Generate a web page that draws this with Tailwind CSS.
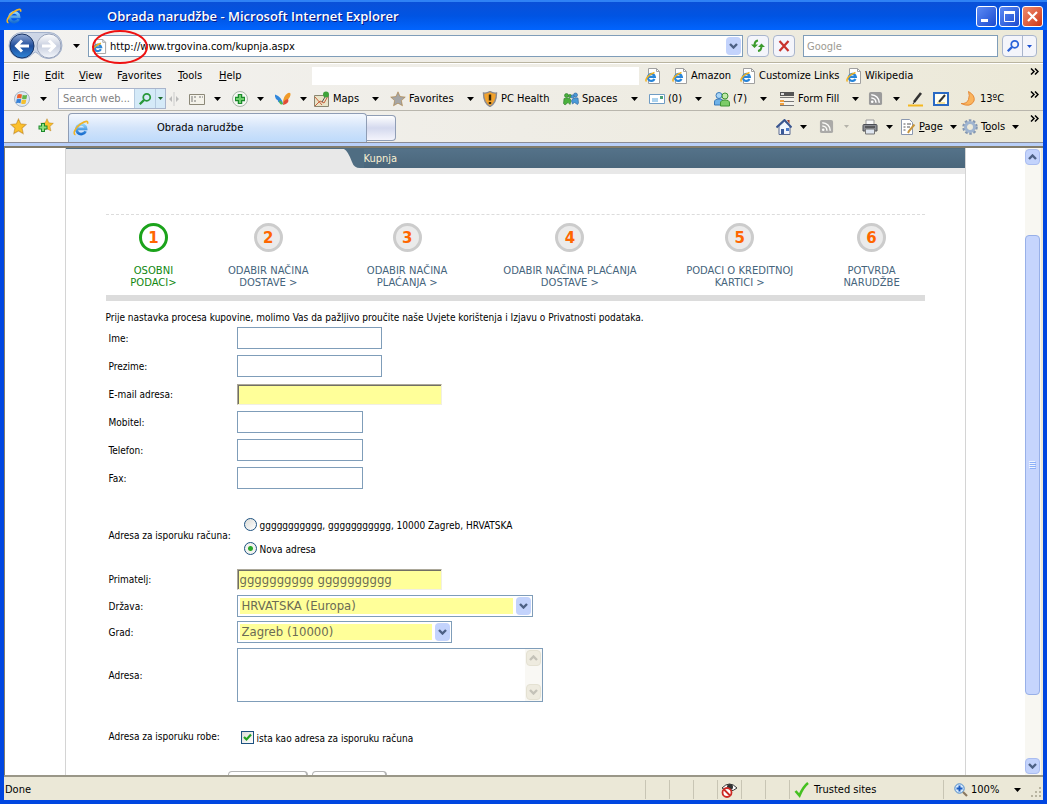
<!DOCTYPE html>
<html lang="hr">

<head>
    <meta charset="UTF-8">
    <meta name="viewport" content="width=device-width, initial-scale=1.0">
    <title>Obrada narudžbe - Microsoft Internet Explorer</title>
    <script src="https://cdn.jsdelivr.net/npm/@tailwindcss/browser@4"></script>
</head>

<body class="h-screen flex flex-col overflow-hidden bg-[#0046e0] text-black text-[11px] leading-4 font-['DejaVu_Sans_Condensed','DejaVu_Sans',sans-serif]">

    <!-- Shared icons -->
    <svg class="absolute size-0">
        <linearGradient id="gBlue" x1="0" y1="0" x2="0" y2="1"><stop offset="0" stop-color="#8fd4fa"/><stop offset="1" stop-color="#1a6fd0"/></linearGradient>
        <symbol id="arrow" viewBox="0 0 7 4"><path d="M0 0h7L3.500 4z" fill="currentColor"/></symbol>
        <symbol id="more" viewBox="0 0 9 7"><path d="M1 .5l3 3-3 3M5 .5l3 3-3 3" fill="none" stroke="#000" stroke-width="1.500"/></symbol>
        <symbol id="chev" viewBox="0 0 9 6"><path d="M1 1l3.500 3.500L8 1" fill="none" stroke="currentColor" stroke-width="2.400"/></symbol>
        <symbol id="ie" viewBox="0 0 16 16">
            <path d="M12.600 11.200A4.800 4.800 0 1 1 13 8.800H4.500" fill="none" stroke="url(#gBlue)" stroke-width="2.800"/>
            <path d="M2.500 14.800C-.8 14 2.500 7.500 7.500 4S15.500.5 14.500 3.800" fill="none" stroke="#f0b428" stroke-width="1.600"/>
        </symbol>
        <symbol id="iepage" viewBox="0 0 16 16">
            <path d="M3.500.5h8l3 3v12h-11z" fill="#fff" stroke="#a0a0a0"/>
            <path d="M11.500.5v3h3" fill="none" stroke="#a0a0a0"/>
            <path d="M9.500 11A3.500 3.500 0 1 1 9.800 8.800H3.500" fill="none" stroke="#2a86d8" stroke-width="2.200"/>
            <path d="M1.500 13.500C-.5 12 3 6.500 9.500 4.500" fill="none" stroke="#f0b020" stroke-width="1.500"/>
        </symbol>
        <symbol id="rss" viewBox="0 0 16 16">
            <rect x="1" y="1" width="14" height="14" rx="2" fill="#9b9b9b"/>
            <circle cx="4.500" cy="11.500" r="1.400" fill="#fff"/>
            <path d="M3.500 7.500a5 5 0 0 1 5 5M3.500 4a8.500 8.500 0 0 1 8.500 8.500" fill="none" stroke="#fff" stroke-width="1.600"/>
        </symbol>
        <symbol id="star" viewBox="0 0 16 16"><path d="M8 .8l2.100 4.700 5.200.6-3.900 3.500 1.100 5.200L8 12.200l-4.500 2.600 1.100-5.200L.7 6.100l5.200-.6z" fill="currentColor" stroke="#a0600066"/></symbol>
    </svg>

    <!-- Title bar -->
    <header class="h-[30px] shrink-0 flex items-center bg-linear-to-b from-[#0a50d8] via-[#0054e3] to-[#0164fe] border-t-2 border-[#2f82f5] pl-[6px] pr-1">
        <svg class="size-4"><use href="#ie"/></svg>
        <h1 class="ml-[85px] flex-1 text-[13px] font-semibold text-white font-['Open_Sans','Noto_Sans',sans-serif] [text-shadow:1px_1px_#0a1883]">Obrada narudžbe - Microsoft Internet Explorer</h1>
        <div class="flex gap-[2px]">
            <button aria-label="Minimize" class="size-[21px] rounded-[3px] border border-white bg-linear-to-br from-[#5d8bf5] to-[#1c49cf]"><svg class="size-[19px]" viewBox="0 0 19 19"><path d="M4 12h7v3H4z" fill="#fff"/></svg></button>
            <button aria-label="Maximize" class="size-[21px] rounded-[3px] border border-white bg-linear-to-br from-[#5d8bf5] to-[#1c49cf]"><svg class="size-[19px]" viewBox="0 0 19 19"><path d="M4.500 5v9.500h10V5M4 5h11" fill="none" stroke="#fff"/><path d="M4 4h11v3H4z" fill="#fff"/></svg></button>
            <button aria-label="Close" class="size-[21px] rounded-[3px] border border-white bg-linear-to-br from-[#f08a6c] to-[#cc3310]"><svg class="size-[19px]" viewBox="0 0 19 19"><path d="M5 5l9 9M14 5l-9 9" stroke="#fff" stroke-width="2.200"/></svg></button>
        </div>
    </header>

    <div class="flex-1 min-h-0 mx-1 mb-1 flex flex-col bg-linear-to-r from-[#f3f2f0] via-[#efede6] to-[#ece9d8]">

        <!-- Address bar -->
        <div class="relative h-[33px] shrink-0 flex items-center border-b border-[#b9b4a0] pl-1 pr-[6px]">
            <svg class="w-[56px] h-[30px] shrink-0" viewBox="0 0 56 30">
                <defs>
                    <linearGradient id="nav" x1="0" y1="0" x2="0" y2="1"><stop offset="0" stop-color="#8fa6d2"/><stop offset=".5" stop-color="#1f4d9c"/><stop offset="1" stop-color="#2f86d8"/></linearGradient>
                    <linearGradient id="nav2" x1="0" y1="0" x2="0" y2="1"><stop offset="0" stop-color="#fff"/><stop offset=".5" stop-color="#c8cfdf"/><stop offset="1" stop-color="#f4f7fc"/></linearGradient>
                </defs>
                <path d="M14 1.500h27a13 13 0 0 1 0 26q-7 0-11-5-3-3-5 0-4 5-11 5a13 13 0 0 1 0-26z" fill="#cdd6e6" stroke="#a4b2cc"/>
                <circle cx="14" cy="15" r="12" fill="url(#nav)" stroke="#1a3566"/>
                <path d="M21 15H9M14 9.500L8.500 15l5.500 5.500" fill="none" stroke="#fff" stroke-width="3"/>
                <circle cx="41" cy="15" r="12" fill="url(#nav2)" stroke="#98a3ba"/>
                <path d="M34 15h12M41 9.500l5.500 5.500-5.500 5.500" fill="none" stroke="#fff" stroke-width="3"/>
            </svg>
            <button aria-label="Recent pages" class="w-[24px] shrink-0 grid place-items-center"><svg class="w-[7px] h-1"><use href="#arrow"/></svg></button>
            <div class="flex-1 h-[22px] flex items-center border border-[#7f9db9] bg-white pl-[3px] pr-px">
                <svg class="size-[15px] shrink-0"><use href="#iepage"/></svg>
                <input aria-label="Address" value="http://www.trgovina.com/kupnja.aspx" class="ml-[3px] min-w-0 flex-1 h-5 outline-none">
                <button aria-label="Show address list" class="w-[15px] h-[18px] rounded-sm bg-[#c3d3fc] text-[#4d6185] grid place-items-center"><svg class="w-[9px] h-[6px]"><use href="#chev"/></svg></button>
            </div>
            <button aria-label="Refresh" class="ml-1 size-[22px] shrink-0 rounded-sm border border-[#a9b5cc] bg-[#f4f5fb] grid place-items-center">
                <svg class="size-4" viewBox="0 0 16 16" fill="none" stroke="#3a9a2c" stroke-width="2"><path d="M8 2.500q-3.500.5-3.500 5M8 13q3.500-.5 3.500-5"/><path d="M1 6.500h7L4.500 10zM15 9H8l3.500-3.500z" fill="#3a9a2c" stroke="none"/></svg>
            </button>
            <button aria-label="Stop" class="ml-1 size-[22px] shrink-0 rounded-sm border border-[#a9b5cc] bg-[#f4f5fb] grid place-items-center">
                <svg class="size-4" viewBox="0 0 16 16"><path d="M3.500 3l9 10M12.500 3l-9 10" stroke="#c8322c" stroke-width="2.200"/></svg>
            </button>
            <input aria-label="Search" placeholder="Google" class="ml-2 w-[195px] h-[22px] shrink-0 border border-[#7f9db9] bg-white px-[3px] outline-none placeholder:text-[#9c9a92]">
            <div class="ml-1 h-[22px] shrink-0 flex rounded-sm border border-[#a9b5cc] bg-[#f4f5fb]">
                <button aria-label="Go" class="w-5 grid place-items-center border-r border-[#a9b5cc]"><svg class="size-[14px]" viewBox="0 0 16 16" fill="none" stroke="#2a62d8"><circle cx="10" cy="6" r="4" stroke-width="2"/><path d="M7 9l-5 5" stroke-width="2.600"/></svg></button>
                <button aria-label="Search options" class="w-[13px] grid place-items-center text-[#1a4fd0]"><svg class="w-[5px] h-[3px]"><use href="#arrow"/></svg></button>
            </div>
            <!-- Red marker round the protocol -->
            <svg class="absolute left-[86px] -top-px w-[60px] h-[37px] pointer-events-none" viewBox="0 0 60 37"><ellipse cx="30" cy="18" rx="27" ry="16" fill="none" stroke="#ee1111" stroke-width="2"/></svg>
        </div>

        <!-- Menu and links -->
        <div class="h-[24px] shrink-0 flex items-center border-t border-white pl-[9px] pr-1 whitespace-nowrap">
            <nav class="flex w-[299px] shrink-0">
                <a href="#" class="w-8"><u>F</u>ile</a>
                <a href="#" class="w-[34px]"><u>E</u>dit</a>
                <a href="#" class="w-[38px]"><u>V</u>iew</a>
                <a href="#" class="w-[61px]">F<u>a</u>vorites</a>
                <a href="#" class="w-[41px]"><u>T</u>ools</a>
                <a href="#"><u>H</u>elp</a>
            </nav>
            <div class="flex-1 h-[18px] bg-white"></div>
            <nav class="flex shrink-0 ml-[6px]">
                <a href="#" aria-label="Link" class="w-[27px]"><svg class="size-4"><use href="#iepage"/></svg></a>
                <a href="#" class="w-[68px] flex gap-[3px]"><svg class="size-4"><use href="#iepage"/></svg>Amazon</a>
                <a href="#" class="w-[106px] flex gap-[3px]"><svg class="size-4"><use href="#iepage"/></svg>Customize Links</a>
                <a href="#" class="w-[184px] flex gap-[3px]"><svg class="size-4"><use href="#iepage"/></svg>Wikipedia</a>
            </nav>
            <button aria-label="More links" class="w-[9px] self-start pt-1"><svg class="w-[9px] h-[7px]"><use href="#more"/></svg></button>
        </div>

        <!-- Toolbar -->
        <div class="h-[24px] shrink-0 flex items-center border-b border-[#b9b6ad] pl-[10px] pr-1 whitespace-nowrap">
            <button aria-label="Windows Live" class="w-[44px] shrink-0 flex items-center gap-[10px]">
                <svg class="size-4" viewBox="0 0 16 16"><circle cx="8" cy="8" r="7.500" fill="#dce8f4" stroke="#a8b4c4"/><path d="M3.500 3.500q2-1 4.500 0L7.300 7.500q-2.500-1-4.500 0z" fill="#f0602c"/><path d="M8.700 3.700q2 1 4.500 0L12.500 7.700q-2.500 1-4.500 0z" fill="#62b44c"/><path d="M2.700 8.300q2-1 4.500 0l-.7 4q-2.500-1-4.500 0z" fill="#3480d8"/><path d="M7.800 8.600q2 1 4.500 0l-.7 4q-2.500 1-4.500 0z" fill="#f4c030"/></svg>
                <svg class="w-[7px] h-1"><use href="#arrow"/></svg>
            </button>
            <div class="w-[108px] h-[21px] shrink-0 flex border border-[#a9b5cc] bg-white">
                <input aria-label="Search web" placeholder="Search web..." class="w-[75px] pl-1 outline-none placeholder:text-[#808080]">
                <button aria-label="Search" class="w-[22px] grid place-items-center bg-[#d5eaf8] border-x border-[#b5cbe0]"><svg class="size-[14px]" viewBox="0 0 16 16" fill="none" stroke="#27983a"><circle cx="10" cy="6" r="4" stroke-width="2"/><path d="M7 9l-5 5" stroke-width="2.600"/></svg></button>
                <button aria-label="Search options" class="flex-1 grid place-items-center bg-[#d5eaf8] text-[#1c6a2c]"><svg class="w-[5px] h-[3px]"><use href="#arrow"/></svg></button>
            </div>
            <svg class="ml-[3px] w-[10px] h-[14px] shrink-0" viewBox="0 0 10 14"><path d="M5 0v14" stroke="#ccc"/><path d="M3 4L0 7l3 3zM7 4l3 3-3 3z" fill="#bbb"/></svg>
            <button aria-label="Card" class="ml-[10px] w-[43px] shrink-0 flex items-center gap-[9px]">
                <svg class="size-4" viewBox="0 0 16 16"><path d="M.5 3.500h15v10H.5z" fill="#f4f2ea" stroke="#8c8878"/><path d="M2 6h6M2 8h3M10 6h4M2 10h6" stroke="#777" stroke-dasharray="2 1"/></svg>
                <svg class="w-[7px] h-1"><use href="#arrow"/></svg>
            </button>
            <button aria-label="Add" class="w-[43px] shrink-0 flex items-center gap-[9px]">
                <svg class="size-4" viewBox="0 0 16 16"><circle cx="8" cy="8" r="7.500" fill="#f4f7f2" stroke="#a9b5a9"/><path d="M8 3v10M3 8h10" stroke="#1c8a2c" stroke-width="4.500"/><path d="M8 4v8M4 8h8" stroke="#6fd06c" stroke-width="2"/></svg>
                <svg class="w-[7px] h-1"><use href="#arrow"/></svg>
            </button>
            <button aria-label="MSN" class="w-[39px] shrink-0 flex items-center gap-[9px]">
                <svg class="size-4" viewBox="0 0 16 16"><path d="M8 13Q7 6 0 3.500-.5 8 3 9.500q-1 2 5 3.500z" fill="#2f86dc"/><path d="M8 12Q8 5 13 2q3-1 2.500 2-1 5-7.500 8z" fill="#f09a28"/><path d="M4 10q2-2 4 3-3 2-4-3z" fill="#4db848"/><path d="M8 14q0-5 5-6 2 4-5 6z" fill="#e04a38"/></svg>
                <svg class="w-[7px] h-1"><use href="#arrow"/></svg>
            </button>
            <button class="w-[76px] shrink-0 flex items-center gap-[3px]">
                <svg class="size-4" viewBox="0 0 16 16"><path d="M.5 4.500h14v11H.5z" fill="#e9e4c8" stroke="#8a8670"/><path d="M1 15l5-5 4 2 4-7M1 6l7 8" fill="none" stroke="#c8603c"/><circle cx="12" cy="3.500" r="3" fill="#3fa33a"/><path d="M11 6l-3 5" stroke="#555"/></svg>
                Maps
                <svg class="ml-[10px] w-[7px] h-1"><use href="#arrow"/></svg>
            </button>
            <button class="w-[92px] shrink-0 flex items-center gap-[3px]">
                <svg class="size-4 text-[#a6a6a6]"><use href="#star"/></svg>
                Favorites
                <svg class="ml-[10px] w-[7px] h-1"><use href="#arrow"/></svg>
            </button>
            <button class="w-[81px] shrink-0 flex items-center gap-[3px]">
                <svg class="size-4" viewBox="0 0 16 16"><path d="M8 .5q3 2 6.500 1.500 0 10-6.500 13.500Q1.500 12 1.500 2 5 2.500 8 .5z" fill="#f2a22c" stroke="#8a8a90" stroke-width="1.400"/><path d="M8 3.500v6M8 11v2" stroke="#3a2808" stroke-width="2.400"/></svg>
                PC Health
            </button>
            <button class="w-[86px] shrink-0 flex items-center gap-[3px]">
                <svg class="size-4" viewBox="0 0 16 16"><g fill="#4ab03c" stroke="#2a7a2c" stroke-width=".6"><circle cx="3.500" cy="4.500" r="2"/><circle cx="7" cy="5" r="1.600"/><path d="M1 7.500q3-1 6 0l1 2-1 4-2-2-3 2.500-1.500-1.500z"/></g><g fill="#4a9ad8" stroke="#2a6098" stroke-width=".6"><circle cx="12.500" cy="4" r="2"/><circle cx="9.500" cy="5.500" r="1.600"/><path d="M15 7q-3-1-5.500 1l-1 2 1 3 2-1.500 3 2 1-1.500z"/></g></svg>
                Spaces
                <svg class="ml-[11px] w-[7px] h-1"><use href="#arrow"/></svg>
            </button>
            <button class="w-[65px] shrink-0 flex items-center gap-[3px]">
                <svg class="size-4" viewBox="0 0 16 16"><path d="M.5 3.500h15v9H.5z" fill="#fff" stroke="#6f9cc4"/><path d="M3 8h6M3 10h6" stroke="#58a6dc"/><path d="M11 5h3v3h-3z" fill="#4aa078"/></svg>
                (0)
                <svg class="ml-[10px] w-[7px] h-1"><use href="#arrow"/></svg>
            </button>
            <button class="w-[65px] shrink-0 flex items-center gap-[3px]">
                <svg class="size-4" viewBox="0 0 16 16"><circle cx="5" cy="4.500" r="3" fill="#a9d4f4" stroke="#3a7ab8"/><path d="M.5 14V11q0-3 4.500-3t4.500 3v3z" fill="#6fb2e8" stroke="#3a7ab8"/><circle cx="11" cy="5" r="3" fill="#c0e8a8" stroke="#3f9434"/><path d="M6.500 15v-3q0-3 4.500-3t4.500 3v3z" fill="#7ccc68" stroke="#3f9434"/></svg>
                (7)
                <svg class="ml-[10px] w-[7px] h-1"><use href="#arrow"/></svg>
            </button>
            <button class="w-[89px] shrink-0 flex items-center gap-[3px]">
                <svg class="size-4" viewBox="0 0 16 16"><path d="M1 1h14v4H1z" fill="#555"/><path d="M2 2h3v2H2z" fill="#ddd"/><path d="M1 6h14v9H1z" fill="#f4f2ec"/><path d="M1 6.500h14M5 10.500h10M1 14.500h14" stroke="#777"/><path d="M1 9h4v2H1zM1 12h4v2H1z" fill="#f0a040"/></svg>
                Form Fill
                <svg class="ml-[10px] w-[7px] h-1"><use href="#arrow"/></svg>
            </button>
            <button aria-label="Feeds" class="w-[40px] shrink-0 flex items-center gap-[10px]">
                <svg class="size-[15px]"><use href="#rss"/></svg>
                <svg class="w-[7px] h-1"><use href="#arrow"/></svg>
            </button>
            <button aria-label="Highlight" class="w-[25px] shrink-0"><svg class="size-4" viewBox="0 0 16 16"><path d="M13 2L6 11" stroke="#333" stroke-width="2.600"/><path d="M7 10l-2 3" stroke="#222"/><path d="M0 14.500h15" stroke="#f4b820" stroke-width="2"/></svg></button>
            <button aria-label="Note" class="w-[27px] shrink-0"><svg class="size-4" viewBox="0 0 16 16"><path d="M1 2h14v12H1z" fill="#fffff4" stroke="#2a6ac4" stroke-width="2"/><path d="M12 4l-6 7" stroke="#333" stroke-width="2"/><path d="M4 12h8" stroke="#f4c840"/></svg></button>
            <button class="shrink-0 flex items-center gap-1">
                <svg class="size-4" viewBox="0 0 16 16"><path d="M8.500.5q7 4 5.500 9.500Q10.500 17 1 12.500q6 .5 7.500-4Q10 4.500 8.500.5z" fill="#fbb45c" stroke="#e58a38"/></svg>
                13ºC
            </button>
            <button aria-label="More tools" class="ml-auto w-[9px] self-start pt-1"><svg class="w-[9px] h-[7px]"><use href="#more"/></svg></button>
        </div>

        <!-- Tabs and commands -->
        <div class="h-[32px] shrink-0 flex items-end border-b border-[#8a8c96] pl-[6px] pr-1 whitespace-nowrap">
            <button aria-label="Favorites Center" class="w-[27px] h-full shrink-0"><svg class="size-[17px] text-[#fbc02d]"><use href="#star"/></svg></button>
            <button aria-label="Add to Favorites" class="w-[31px] h-full shrink-0"><svg class="size-[17px] text-[#fbc02d]" viewBox="0 0 17 17"><use href="#star" x="3" y="0" width="14" height="14"/><path d="M6 5v9M1.500 9.500h9" stroke="#1c8a2c" stroke-width="4"/><path d="M6 6v7M2.500 9.500h7" stroke="#8ce07c" stroke-width="2"/></svg></button>
            <div class="w-[299px] h-[29px] shrink-0 flex items-center border border-b-0 border-[#8f9db5] rounded-t bg-linear-to-b from-[#f4f8fe] via-[#d3e4fa] to-[#bddafb] pl-1">
                <svg class="size-4"><use href="#ie"/></svg>
                <span class="ml-[68px]">Obrada narudžbe</span>
            </div>
            <button aria-label="New tab" class="w-[29px] h-[26px] mb-px shrink-0 border border-l-0 border-[#8f9db5] rounded-r-sm bg-linear-to-b from-white via-[#d4d9ee] to-[#f4f4fc]"></button>
            <div class="ml-auto flex items-center h-full">
                <button aria-label="Home" class="w-[43px] flex items-center gap-2">
                    <svg class="size-4" viewBox="0 0 16 16"><path d="M3 7v8.500h11V7L8.500 2z" fill="#f2f5fc" stroke="#5a6a90"/><path d="M11 1h2.500v4z" fill="#a04030"/><path d="M.5 8.500l8-7.500 7 7.500" fill="none" stroke="#3a5690" stroke-width="2"/><path d="M5 10h3v5H5z" fill="#3a5a9a"/><path d="M10 9h3v3h-3z" fill="#4a78c8"/></svg>
                    <svg class="w-[7px] h-1"><use href="#arrow"/></svg>
                </button>
                <button aria-label="Feeds" class="w-[43px] flex items-center gap-[10px]">
                    <svg class="size-[15px] opacity-80"><use href="#rss"/></svg>
                    <svg class="w-[5px] h-[3px] text-[#b4b2aa]"><use href="#arrow"/></svg>
                </button>
                <button aria-label="Print" class="w-[38px] flex items-center gap-2">
                    <svg class="size-4" viewBox="0 0 16 16"><path d="M4 1h8v5H4z" fill="#f8f8f8" stroke="#999"/><path d="M1 6.500q0-1 1-1h12q1 0 1 1V12H1z" fill="#8b8d94" stroke="#4c4e55"/><path d="M3.500 10h9v5h-9z" fill="#dfe6f0" stroke="#777"/><path d="M3 8h10" stroke="#222"/></svg>
                    <svg class="w-[7px] h-1"><use href="#arrow"/></svg>
                </button>
                <button class="w-[62px] flex items-center gap-[3px]">
                    <svg class="size-4" viewBox="0 0 16 16"><path d="M1.500.5h8l3 3v12h-11z" fill="#fff" stroke="#8a98b0"/><path d="M3.500 5h2M3.500 8h2M3.500 11h2M7 5h4M7 8h3" stroke="#555"/><path d="M14.500 5.500L9 12l-1 2" fill="none" stroke="#c8963c" stroke-width="2"/></svg>
                    <span><u>P</u>age</span>
                    <svg class="ml-1 w-[7px] h-1"><use href="#arrow"/></svg>
                </button>
                <button class="w-[68px] flex items-center gap-[3px]">
                    <svg class="size-4" viewBox="0 0 16 16"><circle cx="8" cy="8" r="6.500" fill="none" stroke="#8497b2" stroke-width="2.500" stroke-dasharray="2.500 1.600"/><circle cx="8" cy="8" r="4.500" fill="none" stroke="#9fb4d0" stroke-width="3"/></svg>
                    <span>T<u>o</u>ols</span>
                    <svg class="ml-1 w-[7px] h-1"><use href="#arrow"/></svg>
                </button>
                <button aria-label="More commands" class="w-[9px] self-start pt-1"><svg class="w-[9px] h-[7px]"><use href="#more"/></svg></button>
            </div>
        </div>
        <div class="h-[5px] shrink-0 bg-[#b9cff8] border-b-2 border-[#817c6c]"></div>

        <!-- Page area -->
        <div class="flex-1 min-h-0 flex border-l border-[#817c6c] bg-white mr-[2px]">
            <main class="flex-1 min-w-0 overflow-hidden text-[10px] leading-[14px]">
                <div class="max-w-[901px] mx-auto min-h-full border-x border-[#d4d4d4]">
                    <div class="flex h-[26px] bg-[#e8e8e8] border-t border-[#4f6d82]">
                        <svg class="ml-[278px] w-5 h-[19px] shrink-0" viewBox="0 0 20 19"><path d="M0 0h20v19H16q-6 0-8-6Q4 2 0 0z" fill="#4f6d82"/></svg>
                        <h2 class="flex-1 h-[19px] bg-linear-to-b from-[#547289] to-[#4a667b] text-[11px] leading-5 text-[#fbf0d2]">Kupnja</h2>
                    </div>

                    <div class="px-10">
                        <ol class="mt-10 pt-2 pb-[6px] border-t border-dashed border-[#dcdcdc] border-b-6 [border-bottom-style:solid] border-b-[#dcdcdc] grid grid-cols-[96fr_134fr_144fr_182fr_158fr_106fr] text-center text-[10px] leading-3 text-[#45647c] font-['DejaVu_Sans',sans-serif]">
                            <li><span class="block size-[29px] mx-auto mb-[13px] rounded-full border-3 border-[#1ba31b] bg-white text-[15px] leading-6 font-bold text-[#ff6600]">1</span><span class="text-[#118811]">OSOBNI<br>PODACI&gt;</span></li>
                            <li><span class="block size-[29px] mx-auto mb-[13px] rounded-full border-3 border-[#cccccc] bg-[#ebebeb] text-[15px] leading-6 font-bold text-[#ff6600]">2</span>ODABIR NAČINA<br>DOSTAVE &gt;</li>
                            <li><span class="block size-[29px] mx-auto mb-[13px] rounded-full border-3 border-[#cccccc] bg-[#ebebeb] text-[15px] leading-6 font-bold text-[#ff6600]">3</span>ODABIR NAČINA<br>PLAĆANJA &gt;</li>
                            <li><span class="block size-[29px] mx-auto mb-[13px] rounded-full border-3 border-[#cccccc] bg-[#ebebeb] text-[15px] leading-6 font-bold text-[#ff6600]">4</span>ODABIR NAČINA PLAĆANJA<br>DOSTAVE &gt;</li>
                            <li><span class="block size-[29px] mx-auto mb-[13px] rounded-full border-3 border-[#cccccc] bg-[#ebebeb] text-[15px] leading-6 font-bold text-[#ff6600]">5</span>PODACI O KREDITNOJ<br>KARTICI &gt;</li>
                            <li><span class="block size-[29px] mx-auto mb-[13px] rounded-full border-3 border-[#cccccc] bg-[#ebebeb] text-[15px] leading-6 font-bold text-[#ff6600]">6</span>POTVRDA<br>NARUDŽBE</li>
                        </ol>

                        <p class="mt-[10px] leading-[13px]">Prije nastavka procesa kupovine, molimo Vas da pažljivo proučite naše Uvjete korištenja i Izjavu o Privatnosti podataka.</p>

                        <form class="pl-[3px]">
                            <div class="h-7 flex items-center"><label for="ime" class="w-32 pt-[2px] shrink-0">Ime:</label><input id="ime" class="w-[145px] h-[22px] border border-[#7f9db9] px-1 text-[13px]"></div>
                            <div class="h-7 flex items-center"><label for="prezime" class="w-32 pt-[2px] shrink-0">Prezime:</label><input id="prezime" class="w-[145px] h-[22px] border border-[#7f9db9] px-1 text-[13px]"></div>
                            <div class="h-7 flex items-center"><label for="email" class="w-32 pt-[2px] shrink-0">E-mail adresa:</label><input id="email" type="email" class="w-[205px] h-[21px] border border-t-[#aca899] border-l-[#aca899] border-r-[#f1efe2] border-b-[#f1efe2] shadow-[inset_1px_1px_#716f64] bg-[#ffff99] px-1 text-[13px]"></div>
                            <div class="h-7 flex items-center"><label for="mobitel" class="w-32 pt-[2px] shrink-0">Mobitel:</label><input id="mobitel" class="w-[126px] h-[22px] border border-[#7f9db9] px-1 text-[13px]"></div>
                            <div class="h-7 flex items-center"><label for="telefon" class="w-32 pt-[2px] shrink-0">Telefon:</label><input id="telefon" class="w-[126px] h-[22px] border border-[#7f9db9] px-1 text-[13px]"></div>
                            <div class="h-7 flex items-center"><label for="fax" class="w-32 pt-[2px] shrink-0">Fax:</label><input id="fax" class="w-[126px] h-[22px] border border-[#7f9db9] px-1 text-[13px]"></div>

                            <div role="radiogroup" aria-labelledby="racun" class="mt-5 flex items-center">
                                <span id="racun" class="w-[135px] shrink-0">Adresa za isporuku računa:</span>
                                <div>
                                    <label class="h-6 flex items-center gap-[3px]"><input type="radio" name="adresa" class="appearance-none size-[13px] rounded-full border border-[#1c5180] bg-linear-to-br from-[#dcdcd7] to-white"><span class="pt-[3px]">ggggggggggg, ggggggggggg, 10000 Zagreb, HRVATSKA</span></label>
                                    <label class="h-6 flex items-center gap-[3px]"><input type="radio" name="adresa" checked class="appearance-none size-[13px] rounded-full border border-[#1c5180] bg-[radial-gradient(circle,#2ba82b_2px,#f2f2ef_3px)]"><span class="pt-[3px]">Nova adresa</span></label>
                                </div>
                            </div>

                            <div class="mt-[5px] h-7 flex items-center"><label for="primatelj" class="w-32 pt-[2px] shrink-0">Primatelj:</label><input id="primatelj" value="gggggggggg gggggggggg" class="w-[205px] h-[21px] border border-t-[#aca899] border-l-[#aca899] border-r-[#f1efe2] border-b-[#f1efe2] shadow-[inset_1px_1px_#716f64] bg-[#ffff99] px-[2px] text-[13px] text-[#6b6b55]"></div>
                            <div class="h-[26px] flex items-center">
                                <label for="drzava" class="w-32 pt-[2px] shrink-0">Država:</label>
                                <div class="relative w-[296px] h-[22px] border border-[#7f9db9] p-[2px]">
                                    <select id="drzava" class="appearance-none block w-[273px] h-4 bg-[#ffff99] pl-[2px] text-[13px] leading-4 text-[#6b6b55]"><option>HRVATSKA (Europa)</option></select>
                                    <span class="absolute right-px top-px w-[15px] h-[18px] rounded-sm bg-[#c3d3fc] text-[#4d6185] grid place-items-center pointer-events-none"><svg class="w-[9px] h-[6px]"><use href="#chev"/></svg></span>
                                </div>
                            </div>
                            <div class="h-[26px] flex items-center">
                                <label for="grad" class="w-32 pt-[2px] shrink-0">Grad:</label>
                                <div class="relative w-[215px] h-[22px] border border-[#7f9db9] p-[2px]">
                                    <select id="grad" class="appearance-none block w-[192px] h-4 bg-[#ffff99] pl-[2px] text-[13px] leading-4 text-[#6b6b55]"><option>Zagreb (10000)</option></select>
                                    <span class="absolute right-px top-px w-[15px] h-[18px] rounded-sm bg-[#c3d3fc] text-[#4d6185] grid place-items-center pointer-events-none"><svg class="w-[9px] h-[6px]"><use href="#chev"/></svg></span>
                                </div>
                            </div>
                            <div class="h-[60px] flex items-center">
                                <label for="adresa" class="w-32 pt-[2px] shrink-0">Adresa:</label>
                                <div class="w-[306px] h-[54px] flex border border-[#7f9db9]">
                                    <textarea id="adresa" class="flex-1 resize-none outline-none px-1 text-[13px]"></textarea>
                                    <div class="w-[17px] p-px flex flex-col justify-between bg-[#f9f8f4] text-[#c4c2b8]">
                                        <span class="h-4 rounded-sm border border-[#e4e1d2] bg-[#eeebdf] grid place-items-center"><svg class="w-[9px] h-[6px] rotate-180"><use href="#chev"/></svg></span>
                                        <span class="h-4 rounded-sm border border-[#e4e1d2] bg-[#eeebdf] grid place-items-center"><svg class="w-[9px] h-[6px]"><use href="#chev"/></svg></span>
                                    </div>
                                </div>
                            </div>

                            <div class="mt-[18px] h-7 flex items-center">
                                <span class="w-[132px] shrink-0">Adresa za isporuku robe:</span>
                                <label class="flex items-center gap-[3px]">
                                    <span class="relative size-[13px]">
                                        <input type="checkbox" checked class="appearance-none block size-[13px] border border-[#1c5180] bg-linear-to-br from-[#dcdcd7] to-white">
                                        <svg class="absolute inset-0 size-[13px] pointer-events-none" viewBox="0 0 13 13"><path d="M3 6l2.500 2.500L10 3.500" fill="none" stroke="#21a121" stroke-width="2.200"/></svg>
                                    </span>
                                    <span class="pt-[3px]">ista kao adresa za isporuku računa</span>
                                </label>
                            </div>

                            <div class="mt-5 ml-[119px] flex gap-1">
                                <button type="button" aria-label="Natrag" class="w-20 h-[22px] rounded-sm border border-r-2 border-[#b4b4b4] bg-white"></button>
                                <button type="submit" aria-label="Dalje" class="w-[75px] h-[22px] rounded-sm border border-r-2 border-[#b4b4b4] bg-white"></button>
                            </div>
                        </form>
                    </div>
                </div>
            </main>

            <!-- Scrollbar -->
            <div class="w-4 shrink-0 flex flex-col bg-[#f8f7f2] text-[#4d6185] py-px pr-px">
                <button aria-label="Scroll up" class="h-4 rounded-sm bg-[#c3d3fc] border border-[#aabdf0] grid place-items-center"><svg class="w-[9px] h-[6px] rotate-180"><use href="#chev"/></svg></button>
                <div class="basis-[70px] shrink-0"></div>
                <div class="flex-1 rounded-sm bg-[#c6d5fd] border border-[#98b0e8] grid place-items-center"><svg class="w-[7px] h-[8px]" viewBox="0 0 7 8"><path d="M0 .5h6M0 2.500h6M0 4.500h6M0 6.500h6" stroke="#eef4fe"/><path d="M1 1.500h6M1 3.500h6M1 5.500h6M1 7.500h6" stroke="#8cb0f8"/></svg></div>
                <div class="basis-[63px] shrink-0"></div>
                <button aria-label="Scroll down" class="h-4 rounded-sm bg-[#c3d3fc] border border-[#aabdf0] grid place-items-center"><svg class="w-[9px] h-[6px]"><use href="#chev"/></svg></button>
            </div>
        </div>

        <!-- Status bar -->
        <footer class="h-[25px] shrink-0 flex items-center border-t-2 border-[#9a9788] bg-[#ebe8d7] pl-px pt-[2px]">
            <span class="flex-1">Done</span>
            <div class="h-[19px] w-6 border-l border-[#c8c5b4]"></div>
            <div class="h-[19px] w-6 border-l border-[#c8c5b4]"></div>
            <div class="h-[19px] w-6 border-l border-[#c8c5b4]"></div>
            <div class="h-[19px] w-6 border-l border-[#c8c5b4] grid place-items-center">
                <svg class="w-[17px] h-4" viewBox="0 0 17 16"><path d="M1 6q7.500-8 15 0-7 6-15 0z" fill="#fff" stroke="#333"/><circle cx="9" cy="5" r="3" fill="#333"/><circle cx="6" cy="10.500" r="4.500" fill="#fff" stroke="#cc2a24" stroke-width="1.800"/><path d="M3 7.500l6 6" stroke="#cc2a24" stroke-width="1.800"/></svg>
            </div>
            <div class="h-[19px] w-6 border-l border-[#c8c5b4]"></div>
            <div class="h-[19px] w-6 border-l border-[#c8c5b4]"></div>
            <div class="h-[19px] w-[154px] border-l border-[#c8c5b4] flex items-center gap-1 pl-1">
                <svg class="size-4" viewBox="0 0 16 16"><path d="M1.500 9l4 4.500Q9 5 14 1" fill="none" stroke="#45c020" stroke-width="2.600"/></svg>
                Trusted sites
            </div>
            <div class="h-[19px] w-[100px] border-l border-[#c8c5b4] flex items-center gap-[3px] pl-[10px]">
                <svg class="size-[14px]" viewBox="0 0 14 14"><circle cx="5.500" cy="5.500" r="4.700" fill="#d4e8fc" stroke="#4a88c8"/><path d="M5.500 2.500v6M2.500 5.500h6" stroke="#1c5cc0" stroke-width="2"/><path d="M9 9l4 4" stroke="#8a7860" stroke-width="2.200"/></svg>
                100%
                <svg class="ml-3 w-[7px] h-1"><use href="#arrow"/></svg>
                <svg class="ml-auto self-end size-3" viewBox="0 0 12 12" fill="#b8b4a0"><path d="M8 0h2v2H8zM8 4h2v2H8zM4 4h2v2H4zM8 8h2v2H8zM4 8h2v2H4zM0 8h2v2H0z"/></svg>
            </div>
        </footer>
    </div>

</body>

</html>
